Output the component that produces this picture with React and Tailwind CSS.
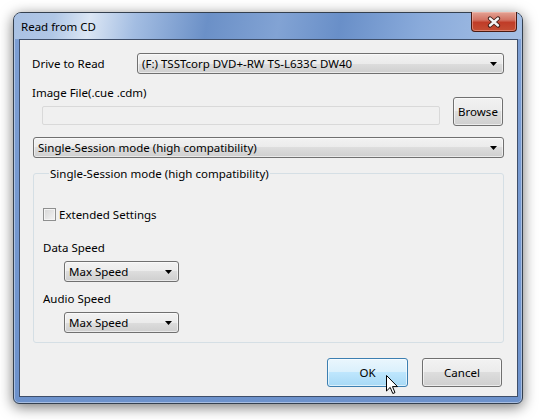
import React from 'react';

const Arrow = () => (
  <svg width="7" height="4" viewBox="0 0 7 4" className="shrink-0">
    <path d="M0 0 H7 L3.5 4 Z" fill="#000" />
  </svg>
);

const Combo = ({ text, className = '' }) => (
  <div
    className={`h-[21px] flex items-center justify-between border border-[#707070] rounded-[3px] bg-[linear-gradient(to_bottom,#f2f2f2_0%,#ebebeb_50%,#dddddd_50%,#cfcfcf_100%)] shadow-[inset_0_0_0_1px_rgba(255,255,255,0.55)] pl-[4px] pr-[6px] ${className}`}
  >
    <span className="leading-[15px] whitespace-nowrap">{text}</span>
    <Arrow />
  </div>
);

const Button = ({ children, hover, className = '' }) => (
  <div
    className={`relative h-[29px] flex items-center justify-center rounded-[3px] border shadow-[inset_0_0_0_1px_rgba(255,255,255,0.6)] ${
      hover
        ? 'border-[#3c7fb1] bg-[linear-gradient(to_bottom,#eaf6fd_0%,#d9f0fc_50%,#bee6fd_50%,#a7d9f5_100%)]'
        : 'border-[#707070] bg-[linear-gradient(to_bottom,#f2f2f2_0%,#ebebeb_50%,#dddddd_50%,#cfcfcf_100%)]'
    } ${className}`}
  >
    {children}
  </div>
);

export default function App() {
  return (
    <div className="w-[539px] h-[420px] bg-white pt-[12px] pl-[13px] font-['Noto_Sans',sans-serif] text-[11.5px] text-black">
      <div className="w-[510px] h-[392px] flex flex-col rounded-t-[8px] rounded-b-[6px] border border-[#34404f] bg-[linear-gradient(to_bottom,#7fa0d4_0%,#6d92cc_100%)] shadow-[0_3px_14px_rgba(0,0,0,0.55),inset_0_0_0_1px_rgba(255,255,255,0.4)]">
        {/* title bar */}
        <div className="h-[26px] shrink-0 flex justify-between rounded-t-[7px] bg-[linear-gradient(100deg,#a9c1e3_0%,#b0c7e6_8%,#dbe6f4_15%,#a3bde2_24%,#6b90c7_38%,#82a3d4_52%,#698fc8_64%,#8aabdb_80%,#a6c0e5_100%)]">
          <span className="pl-[7px] pt-[6px] leading-[15px] text-[#000]">Read from CD</span>
          <div className="mr-[5px] w-[46px] h-[20px] -mt-px flex items-center justify-center rounded-b-[4px] border border-t-0 border-[#4a1a12] bg-[linear-gradient(to_bottom,#e3a294_0%,#d27262_42%,#c03c28_55%,#c44e34_100%)] shadow-[inset_0_0_0_1px_rgba(255,210,200,0.4)]">
            <svg width="14" height="12" viewBox="0 0 14 12">
              <path d="M3 2.5 L11 9.5 M11 2.5 L3 9.5" stroke="#3a1a14" strokeWidth="4.2" strokeLinecap="round" />
              <path d="M3 2.5 L11 9.5 M11 2.5 L3 9.5" stroke="#f4f4f4" strokeWidth="2.4" strokeLinecap="round" />
            </svg>
          </div>
        </div>

        {/* client area */}
        <div className="flex-1 ml-[5px] mr-[4px] mb-[6px] border border-[#3f4f6a] bg-[#f0f0f0] flex flex-col pl-[12px] pr-[13px]">
          <div className="mt-[13px] flex items-center">
            <span className="w-[105px] leading-[15px]">Drive to Read</span>
            <Combo text="(F:) TSSTcorp DVD+-RW TS-L633C DW40" className="flex-1" />
          </div>

          <div className="mt-[11px] flex items-end">
            <div className="w-[408px] flex flex-col">
              <span className="leading-[15px]">Image File(.cue .cdm)</span>
              <div className="mt-[6px] mb-[1px] ml-[10px] h-[19px] border border-[#d9d9d9] rounded-[2px] bg-[#f0f0f0]" />
            </div>
            <Button className="ml-[13px] w-[50px]">Browse</Button>
          </div>

          <Combo text="Single-Session mode (high compatibility)" className="mt-[11px] ml-[1px]" />

          <fieldset className="mt-[8px] ml-[1px] h-[177px] border border-[#d5dfe5] rounded-[3px] pl-[9px] flex flex-col">
            <legend className="ml-[6px] px-[1px] leading-[15px]">Single-Session mode (high compatibility)</legend>
            <div className="mt-[26px] h-[15px] flex items-center">
              <div className="w-[13px] h-[13px] border border-[#8e8f8f] bg-[linear-gradient(135deg,#d6d6d6_0%,#f4f4f4_100%)] shadow-[inset_0_0_0_1px_#f4f4f4]" />
              <span className="ml-[3px] leading-[15px]">Extended Settings</span>
            </div>
            <span className="mt-[18px] leading-[15px]">Data Speed</span>
            <Combo text="Max Speed" className="mt-[6px] ml-[21px] w-[115px]" />
            <span className="mt-[9px] leading-[15px]">Audio Speed</span>
            <Combo text="Max Speed" className="mt-[6px] ml-[21px] w-[115px]" />
          </fieldset>

          <div className="mt-[15px] flex justify-end pr-[2px]">
            <Button hover className="w-[81px]">
              OK
              <svg width="13" height="20" viewBox="0 0 13 20" className="absolute left-[58px] top-[16px]">
                <path d="M0.5 0.5 V16 L4.2 12.4 L6.8 18.5 L9 17.6 L6.5 11.6 H11.5 Z" fill="#fff" stroke="#000" strokeWidth="1" strokeLinejoin="round" />
              </svg>
            </Button>
            <Button className="ml-[14px] w-[80px]">Cancel</Button>
          </div>
        </div>
      </div>
    </div>
  );
}
